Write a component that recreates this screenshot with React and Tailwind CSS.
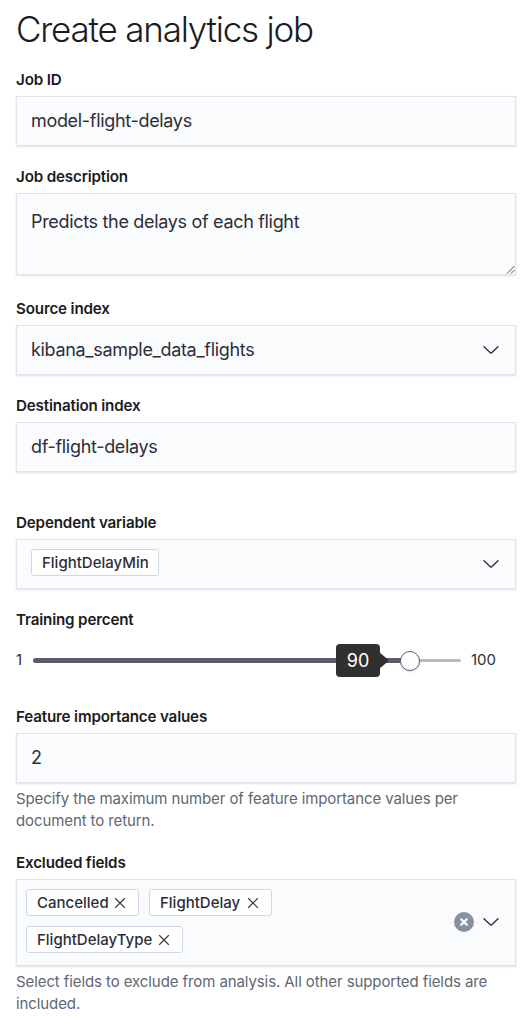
import React from 'react';

function Label({ children }) {
  return <div className="text-[15.2px] leading-5 font-semibold tracking-[-0.17px] text-[#1a1c21]">{children}</div>;
}

function Chevron() {
  return (
    <svg width="18" height="18" viewBox="0 0 18 18" fill="none" className="shrink-0">
      <path d="M2 5.8 L8.3 11.7 Q9 12.3 9.7 11.7 L16 5.8" stroke="#343741" strokeWidth="1.5" strokeLinecap="round" />
    </svg>
  );
}

function Box({ className, children }) {
  return (
    <div className={`flex w-[500px] border border-[#e0e3ee] bg-[#fafbfd] text-[18px] tracking-[-0.32px] text-[#2c2e3a] shadow-[0_1px_2px_rgba(120,130,150,0.25)] ${className}`}>
      {children}
    </div>
  );
}

function Pill({ className, children, removable }) {
  return (
    <div className={`flex h-[27px] items-center justify-between rounded-[3px] border border-[#cfd7e8] bg-white px-[10px] text-[15px] leading-5 font-medium tracking-normal text-[#2c2e3a] ${className}`}>
      <span className="whitespace-nowrap">{children}</span>
      {removable && (
        <svg width="12" height="12" viewBox="0 0 12 12" className="mr-0.5 shrink-0">
          <path d="M1.5 1.5 L10.5 10.5 M10.5 1.5 L1.5 10.5" stroke="#343741" strokeWidth="1.1" strokeLinecap="round" />
        </svg>
      )}
    </div>
  );
}

export default function App() {
  return (
    <main className="h-[1018px] w-[525px] overflow-hidden bg-white pl-4 font-['Inter',sans-serif]">
      <h1 className="h-[70px] pt-[9px] text-[35px] leading-10 font-light tracking-[-1.2px] text-[#1a1c21]">Create analytics job</h1>
      <div className="h-[97px]">
        <Label>Job ID</Label>
        <Box className="mt-[6px] h-[50px] items-center px-[14px] pb-px">model-flight-delays</Box>
      </div>
      <div className="h-[132px]">
        <Label>Job description</Label>
        <Box className="relative mt-[6px] h-[82px] items-start px-[14px] pt-[14px] leading-[27px]">
          Predicts the delays of each flight
          <svg className="absolute right-0 bottom-0" width="9" height="9" viewBox="0 0 9 9">
            <path d="M1 8.5 L8.5 1 M5 8.5 L8.5 5" stroke="#555" strokeWidth="1" />
          </svg>
        </Box>
      </div>
      <div className="h-[97px]">
        <Label>Source index</Label>
        <Box className="mt-[6px] h-[50px] items-center justify-between pr-[15px] pb-px pl-[14px]">kibana_sample_data_flights<Chevron /></Box>
      </div>
      <div className="h-[117px]">
        <Label>Destination index</Label>
        <Box className="mt-[6px] h-[50px] items-center px-[14px] pb-px">df-flight-delays</Box>
      </div>
      <div className="h-[97px]">
        <Label>Dependent variable</Label>
        <Box className="mt-[6px] h-[50px] items-start justify-between pt-[9px] pr-[15px] pl-[14px]">
          <Pill className="w-[128px]">FlightDelayMin</Pill>
          <div className="flex h-[29px] items-center"><Chevron /></div>
        </Box>
      </div>
      <div className="h-[97px]">
        <Label>Training percent</Label>
        <div className="mt-[20px] flex h-[21px] items-center text-[15px] text-[#2c2e3a]">
          <span className="w-[17px] pb-px">1</span>
          <div className="relative flex h-[21px] w-[428px] items-center">
            <div className="h-[5px] w-[377px] rounded-l-full bg-[#585c6e]" />
            <div className="h-[3px] flex-1 rounded-r-full bg-[#b8bcc2]" />
            <div className="absolute top-[1px] left-[367px] size-5 rounded-full border border-[#5c6072] bg-white shadow-[0_1px_2px_rgba(80,90,120,0.2)]" />
            <div className="absolute -top-[6px] left-[303px] flex h-[33px] w-[44px] items-center justify-center rounded-[4px] bg-[#303030] text-[18px] text-white">90</div>
            <svg className="absolute top-[2px] left-[346px]" width="10" height="17" viewBox="0 0 10 17"><path d="M0 0 L9 7.5 Q10 8.5 9 9.5 L0 17Z" fill="#303030" /></svg>
          </div>
          <span className="ml-[10px] pb-px">100</span>
        </div>
      </div>
      <div className="h-[146px]">
        <Label>Feature importance values</Label>
        <Box className="mt-[6px] h-[50px] items-center px-[14px] pb-px">2</Box>
        <p className="mt-[5px] text-[15px] leading-[22px] tracking-[-0.1px] text-[#5f6675]">Specify the maximum number of feature importance values per<br />document to return.</p>
      </div>
      <div>
        <Label>Excluded fields</Label>
        <Box className="mt-[6px] h-[87px] items-start justify-between pt-[9px] pr-[15px] pl-[9px]">
          <div className="flex w-[260px] flex-wrap gap-[10px]">
            <Pill removable className="w-[113px]">Cancelled</Pill>
            <Pill removable className="w-[123px]">FlightDelay</Pill>
            <Pill removable className="w-[157px]">FlightDelayType</Pill>
          </div>
          <div className="flex h-[66px] items-center gap-2">
            <svg width="20" height="20" viewBox="0 0 20 20"><circle cx="10" cy="10" r="10" fill="#8890a4" /><path d="M7.2 7.2 L12.8 12.8 M12.8 7.2 L7.2 12.8" stroke="#fff" strokeWidth="2.2" strokeLinecap="round" /></svg>
            <Chevron />
          </div>
        </Box>
        <p className="mt-[5px] text-[15px] leading-[22px] tracking-[-0.09px] text-[#5f6675]">Select fields to exclude from analysis. All other supported fields are<br />included.</p>
      </div>
    </main>
  );
}
